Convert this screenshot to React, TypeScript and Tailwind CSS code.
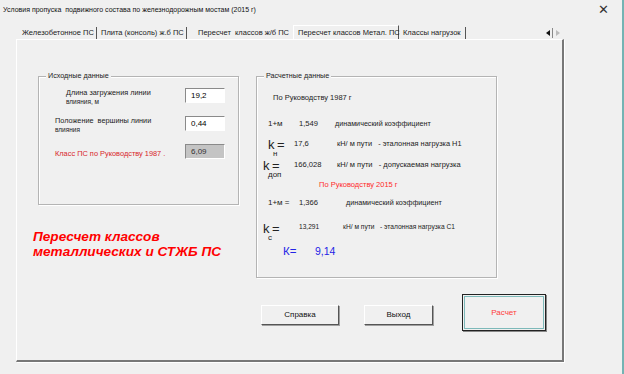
const ui = { fontFamily: '"Liberation Sans", Arial, sans-serif' };

function GroupBox({ title, className, children }: { title: string; className: string; children?: React.ReactNode }) {
  return (
    <div className={`relative border border-[#b4b4b4] shadow-[inset_1px_1px_0_#ffffff,1px_1px_0_#ffffff] ${className}`}>
      <span className="absolute -top-[7px] left-[7px] bg-[#f0f0f0] px-[2px] text-[7.2px] leading-[12px] text-[#222] whitespace-nowrap">{title}</span>
      {children}
    </div>
  );
}

function Field({ value, grey }: { value: string; grey?: boolean }) {
  return (
    <div
      className={`w-[40px] h-[15px] shrink-0 border-t border-l border-[#8a8a8a] border-r border-b border-r-white border-b-white pl-[5px] text-[8px] leading-[13px] ${grey ? "bg-[#c4c4c4] text-[#333]" : "bg-white text-black"}`}
    >
      {value}
    </div>
  );
}

function K({ sub, indent }: { sub: string; indent: string }) {
  return (
    <div className={`${indent} w-[26px] shrink-0`}>
      <div className="text-[13px] leading-[11px] tracking-[-0.5px] text-[#222]">k =</div>
      <div className="ml-[5px] text-[8px] leading-[8px] text-[#222]">{sub}</div>
    </div>
  );
}

function Btn({ label, className }: { label: string; className: string }) {
  return (
    <div
      className={`flex items-center justify-center border border-t-white border-l-white border-r-[#555] border-b-[#555] shadow-[1px_1px_0_#a0a0a0] bg-[#f0f0f0] text-[8px] text-[#111] ${className}`}
    >
      {label}
    </div>
  );
}

export default function App() {
  return (
    <div style={ui} className="w-[624px] h-[374px] bg-[#f0f0f0] overflow-hidden border-r-2 border-[#74b3b3] text-[#222] whitespace-nowrap">
      {/* title bar */}
      <div className="h-[20px] flex items-center justify-between pl-[3px] pr-[13px]">
        <span className="text-[7px] text-[#111]">Условия пропуска&nbsp; подвижного состава по железнодорожным мостам (2015 г)</span>
        <span className="text-[13px] font-light text-[#333]">✕</span>
      </div>

      {/* tabs */}
      <div className="ml-[17px] mt-[5px] w-[547px] h-[14px] flex items-end text-[7.5px] leading-[12px]">
        <div className="w-[80px] h-[12px] pl-[5px] border-r border-[#555]">Железобетонное ПС</div>
        <div className="w-[90px] h-[12px] pl-[4px] border-r border-[#555]">Плита (консоль) ж.б ПС</div>
        <div className="w-[106px] h-[12px] pl-[11px]">Пересчет&nbsp; классов ж/б ПС</div>
        <div className="w-[106px] h-[14px] pl-[4px] pt-[1px] border-t border-l border-white border-r border-r-[#555] bg-[#f0f0f0]">
          Пересчет классов Метал. ПС
        </div>
        <div className="w-[67px] h-[12px] pl-[4px] border-r border-[#555]">Классы нагрузок</div>
        <div className="flex-1" />
        <div className="flex h-[10px] mb-[1px] mr-[1px]">
          <div className="w-[10px] flex items-center justify-center border-r border-[#888]">
            <svg width="4" height="6" viewBox="0 0 4 6"><path d="M4 0 L0 3 L4 6 Z" fill="#111" /></svg>
          </div>
          <div className="w-[10px] flex items-center justify-center">
            <svg width="4" height="6" viewBox="0 0 4 6"><path d="M0 0 L4 3 L0 6 Z" fill="#bbb" /></svg>
          </div>
        </div>
      </div>

      {/* tab page */}
      <div className="ml-[16px] w-[548px] h-[323px] border-t border-l border-white border-r-2 border-b-2 border-r-[#777] border-b-[#777] shadow-[1px_1px_0_#ffffff]">
        <div className="flex pt-[36px]">
          {/* left column */}
          <div className="ml-[21px] w-[201px]">
            <GroupBox title="Исходные данные" className="h-[129px]">
              <div className="flex pt-[11px]">
                <div className="ml-[27px] w-[119px]">
                  <div className="text-[7.3px] leading-[10px]">Длина загружения линии</div>
                  <div className="text-[6.5px] leading-[8px]">влияния, м</div>
                </div>
                <Field value="19,2" />
              </div>
              <div className="flex pt-[10px]">
                <div className="ml-[16px] w-[130px]">
                  <div className="text-[7.3px] leading-[10px]">Положение&nbsp; вершины линии</div>
                  <div className="text-[6.5px] leading-[8px]">влияния</div>
                </div>
                <Field value="0,44" />
              </div>
              <div className="flex pt-[10px]">
                <div className="ml-[16px] w-[130px] pt-[5px] text-[7.4px] leading-[10px] text-[#d8262a]">
                  Класс ПС по Руководству 1987 .
                </div>
                <Field value="6,09" grey />
              </div>
            </GroupBox>
            <div className="mt-[24px] -ml-[5px] text-[13.6px] leading-[15px] font-bold italic text-[#ff0000]">
              Пересчет классов
              <br />
              металлических и СТЖБ ПС
            </div>
          </div>

          {/* right column */}
          <div className="ml-[17px] w-[241px]">
            <GroupBox title="Расчетные данные" className="h-[202px] text-[8px]">
              <div className="pt-[16px] pl-[16px] leading-[10px] text-[7.5px]">По Руководству 1987 г</div>

              <div className="flex mt-[16px] leading-[10px]">
                <span className="ml-[11px] w-[31px]">1+м</span>
                <span className="w-[36px] text-[7.6px]">1,549</span>
                <span className="text-[7.2px]">динамический коэффициент</span>
              </div>

              <div className="flex mt-[10px]">
                <K sub="н" indent="ml-[11px]" />
                <span className="w-[43px] leading-[10px] text-[7.6px]">17,6</span>
                <span className="leading-[10px] text-[7.4px]">кН/ м пути&nbsp;&nbsp; - эталонная нагрузка Н1</span>
              </div>

              <div className="flex mt-[2px]">
                <K sub="доп" indent="ml-[6px] mr-[5px]" />
                <span className="w-[43px] leading-[10px] text-[7.6px]">166,028</span>
                <span className="leading-[10px] text-[7.5px]">кН/ м пути&nbsp;&nbsp; - допускаемая нагрузка</span>
              </div>

              <div className="mt-[1px] pl-[62px] leading-[10px] text-[7.5px] text-[#ff2a2a]">По Руководству 2015 г</div>

              <div className="flex mt-[8px] leading-[10px]">
                <span className="ml-[11px] w-[31px]">1+м =</span>
                <span className="w-[47px] text-[7.6px]">1,366</span>
                <span className="text-[7.2px]">динамический коэффициент</span>
              </div>

              <div className="flex mt-[15px]">
                <K sub="с" indent="ml-[6px] mr-[10px]" />
                <span className="w-[44px] -mt-[1px] text-[6.6px] leading-[9px]">13,291</span>
                <span className="-mt-[1px] text-[6.65px] leading-[9px]">кН/ м пути&nbsp;&nbsp; - эталонная нагрузка С1</span>
              </div>

              <div className="flex items-center mt-[2px] h-[14px] text-[11.5px] leading-[14px] text-[#2424e6]">
                <span className="ml-[26px] w-[32px]">К=</span>
                <span className="text-[10.5px]">9,14</span>
              </div>
            </GroupBox>
          </div>
        </div>

        {/* buttons */}
        <div className="flex items-start mt-[16px]">
          <Btn label="Справка" className="ml-[244px] mt-[11px] w-[78px] h-[20px]" />
          <Btn label="Выход" className="ml-[25px] mt-[11px] w-[69px] h-[20px]" />
          <div className="ml-[29px] w-[84px] h-[37px] border border-[#222] p-[1px] bg-[#f0f0f0] shadow-[1px_1px_0_#888]">
            <div className="w-full h-full border border-[#7db9b9] flex items-center justify-center text-[8px] text-[#ff3c3c]">
              Расчет
            </div>
          </div>
        </div>
      </div>
    </div>
  );
}
